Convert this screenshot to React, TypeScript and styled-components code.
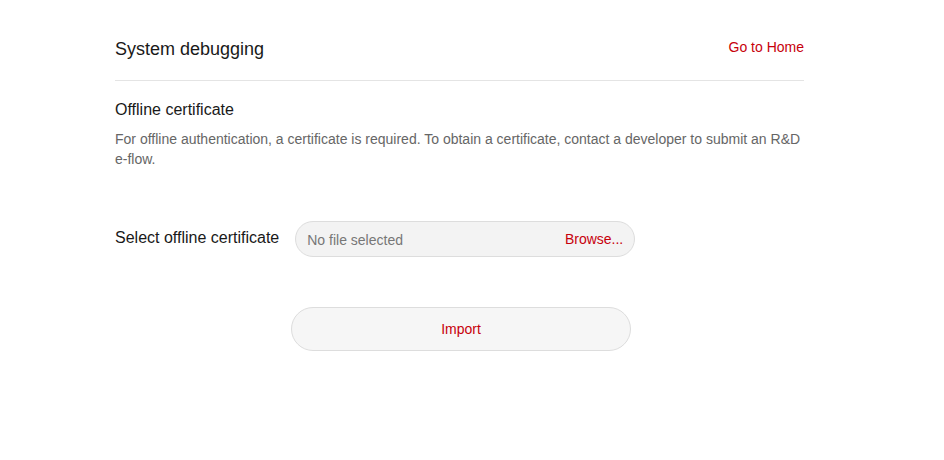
import { createGlobalStyle, styled } from 'styled-components'

const GlobalStyle = createGlobalStyle`
  html, body {
    margin: 0;
    padding: 0;
    background: #ffffff;
    font-family: "Liberation Sans", Arial, sans-serif;
  }
`

const Page = styled.div`
  width: 689px;
  padding: 30px 0 0 115px;
`

const Header = styled.div`
  display: flex;
  justify-content: space-between;
  align-items: center;
  height: 36px;
  padding-bottom: 14px;
  border-bottom: 1px solid #e4e4e4;

  h1 {
    margin: 2px 0 0;
    font-size: 18px;
    font-weight: 400;
    color: #191919;
  }
`

const HomeLink = styled.a`
  font-size: 14px;
  color: #c7000b;
  text-decoration: none;
  cursor: pointer;
  margin-top: -3px;
`

const Section = styled.div`
  padding-top: 19px;

  h3 {
    margin: 0;
    font-size: 16px;
    font-weight: 400;
    color: #191919;
    line-height: 20px;
  }

  p {
    margin: 9px 0 0;
    font-size: 14px;
    line-height: 20px;
    color: #666666;
  }
`

const FormRow = styled.div`
  display: flex;
  align-items: center;
  margin-top: 52px;
  gap: 16px;

  label {
    font-size: 16px;
    color: #191919;
    margin-top: -3px;
  }
`

const FileBox = styled.div`
  box-sizing: border-box;
  width: 340px;
  height: 36px;
  display: flex;
  align-items: center;
  justify-content: space-between;
  padding: 0 11px;
  background: #f3f3f3;
  border: 1px solid #dddddd;
  border-radius: 18px;
  font-size: 14px;

  span {
    color: #777777;
    padding-top: 2px;
  }
`

const Browse = styled.span`
  && {
    color: #c7000b;
    padding-top: 0;
  }
`

const ImportButton = styled.button`
  box-sizing: border-box;
  display: block;
  width: 340px;
  height: 44px;
  margin: 50px 0 0 176px;
  background: #f6f6f6;
  border: 1px solid #dddddd;
  border-radius: 22px;
  color: #c7000b;
  font-family: inherit;
  font-size: 14px;
  cursor: pointer;
`

export default function App() {
  return (
    <>
      <GlobalStyle />
      <Page>
        <Header>
          <h1>System debugging</h1>
          <HomeLink>Go to Home</HomeLink>
        </Header>
        <Section>
          <h3>Offline certificate</h3>
          <p>
            For offline authentication, a certificate is required. To obtain a
            certificate, contact a developer to submit an R&amp;D e-flow.
          </p>
        </Section>
        <FormRow>
          <label>Select offline certificate</label>
          <FileBox>
            <span>No file selected</span>
            <Browse>Browse...</Browse>
          </FileBox>
        </FormRow>
        <ImportButton>Import</ImportButton>
      </Page>
    </>
  )
}
